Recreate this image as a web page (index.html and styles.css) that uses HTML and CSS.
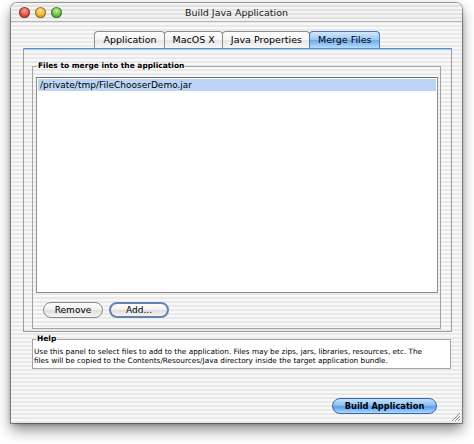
FILE: index.html
```html
<!DOCTYPE html>
<html>
<head>
<meta charset="utf-8">
<title>Build Java Application</title>
<link rel="stylesheet" href="styles.css">
</head>
<body>
<div class="stage">
  <div class="window">
    <div class="titlebar">
      <div class="lights">
        <span class="light red"></span>
        <span class="light yellow"></span>
        <span class="light green"></span>
      </div>
      <div class="title">Build Java Application</div>
      <div></div>
    </div>
    <div class="content">
      <div class="tabs">
        <div class="tab">Application</div>
        <div class="tab">MacOS X</div>
        <div class="tab">Java Properties</div>
        <div class="tab active">Merge Files</div>
      </div>
      <div class="pane">
        <fieldset class="group files">
          <legend>Files to merge into the application</legend>
          <div class="list">
            <div class="row selected">/private/tmp/FileChooserDemo.jar</div>
          </div>
          <div class="buttons">
            <button class="btn">Remove</button>
            <button class="btn focus">Add...</button>
          </div>
        </fieldset>
      </div>
      <fieldset class="group help">
        <legend>Help</legend>
        <div class="helptext">Use this panel to select files to add to the application. Files may be zips, jars, libraries, resources, etc. The files will be copied to the Contents/Resources/Java directory inside the target application bundle.</div>
      </fieldset>
      <div class="footer">
        <button class="btn default">Build Application</button>
      </div>
    </div>
    <svg class="grip" width="10" height="10" viewBox="0 0 10 10">
      <path d="M9 1 L1 9 M9 4 L4 9 M9 7 L7 9" stroke="#8a8a8a" stroke-width="1"/>
      <path d="M10 2 L2 10 M10 5 L5 10 M10 8 L8 10" stroke="#ffffff" stroke-width="1"/>
    </svg>
  </div>
</div>
</body>
</html>
```

FILE: styles.css
```css
* { box-sizing: border-box; }
html, body { margin: 0; padding: 0; background: #ffffff; }
body { font-family: "DejaVu Sans", "Liberation Sans", sans-serif; color: #000; }

.stage { padding: 3px 12px 21px 11px; height: 444px; }

.window {
  position: relative;
  width: 451px;
  height: 420px;
  border-radius: 6px 6px 0 0;
  background: repeating-linear-gradient(to bottom, #f8f8f8 0 2px, #e9e9e9 2px 4px);
  box-shadow: 0 0 0 1px rgba(0,0,0,0.32), 0 7px 14px rgba(0,0,0,0.45), 0 1px 4px rgba(0,0,0,0.25);
  display: flex;
  flex-direction: column;
}

.titlebar {
  height: 19px;
  display: grid;
  grid-template-columns: 1fr auto 1fr;
  align-items: center;
  border-radius: 6px 6px 0 0;
  border-bottom: 1px solid #b4b4b4;
  background: repeating-linear-gradient(to bottom, #f4f4f4 0 2px, #e2e2e2 2px 4px);
}
.lights { display: flex; gap: 5px; padding-left: 8px; }
.light {
  width: 11px; height: 11px; border-radius: 50%;
  box-shadow: inset 0 0 0 1px rgba(0,0,0,0.35);
}
.light.red { background: radial-gradient(circle at 50% 35%, #f7a8a0 0, #e0554c 45%, #b32a22 100%); }
.light.yellow { background: radial-gradient(circle at 50% 35%, #fde3a0 0, #f0b73a 45%, #c2801a 100%); }
.light.green { background: radial-gradient(circle at 50% 35%, #c8f0a8 0, #6cc24a 45%, #3b8a22 100%); }
.title { font-size: 9.5px; color: #1a1a1a; }

.content {
  flex: 1;
  display: flex;
  flex-direction: column;
  padding: 9px 10px 0 12px;
}

.tabs { display: flex; justify-content: center; height: 17px; }
.tab {
  height: 17px;
  padding: 0 7px 0 8px;
  margin-left: -1px;
  border: 1px solid #8e8e8e;
  border-bottom: none;
  border-radius: 4px 4px 0 0;
  background: linear-gradient(#ffffff, #f4f4f4 50%, #e6e6e6 50%, #f7f7f7);
  font-size: 9.5px;
  line-height: 16px;
  white-space: nowrap;
}
.tab.active {
  background: linear-gradient(#d4e8fc, #98c6f4 50%, #6aa9ec 50%, #b8dcfd);
  border-color: #5277ae;
}

.pane {
  height: 284px;
  border: 1px solid #9c9c9c;
  border-top: 1px solid #5a8bd0;
  box-shadow: inset 0 1px 0 #a9cdf5;
  padding: 12px 10px 1px 8px;
}

.group {
  margin: 0;
  min-width: 0;
  border: 1px solid #a4a4a4;
}
.group legend {
  padding: 0 1px;
  margin-left: 1px;
  font-size: 7.5px;
  font-weight: bold;
  line-height: 10px;
}
.files { padding: 6px 2px 9px 3px; height: 268px; }

.list {
  height: 216px;
  background: #ffffff;
  border: 1px solid #8e8e8e;
  border-top-color: #6e6e6e;
  padding: 1px;
}
.row {
  height: 12px;
  line-height: 12px;
  padding-left: 2px;
  font-size: 9px;
}
.row.selected { background: #bcd5f6; }

.buttons { display: flex; gap: 6px; margin-top: 9px; padding-left: 7px; }
.btn {
  font-family: "DejaVu Sans", "Liberation Sans", sans-serif;
  height: 16px;
  padding: 0;
  border: 1px solid #8a8a8a;
  border-radius: 8px;
  background: linear-gradient(#fefefe, #f1f1f1 45%, #dedede 55%, #f6f6f6);
  font-size: 9px;
  color: #000;
  line-height: 14px;
}
.buttons .btn { width: 60px; }
.btn.focus { border: 2px solid #6483b0; line-height: 12px; }

.help {
  margin: 2px 1px 0 9px;
  padding: 3px 20px 3px 1px;
  background: #ffffff;
}
.help legend { margin-left: 2px; }
.helptext { font-size: 7.3px; line-height: 9px; }

.footer { margin-top: auto; display: flex; justify-content: flex-end; padding: 0 15px 9px 0; }
.btn.default {
  width: 105px;
  border-color: #3d68a8;
  background: linear-gradient(#c4e0fb, #8dc0f3 45%, #5b9ded 55%, #a9dafd);
  font-weight: bold;
  font-size: 8.3px;
}

.grip { position: absolute; right: 1px; bottom: 1px; }
```
